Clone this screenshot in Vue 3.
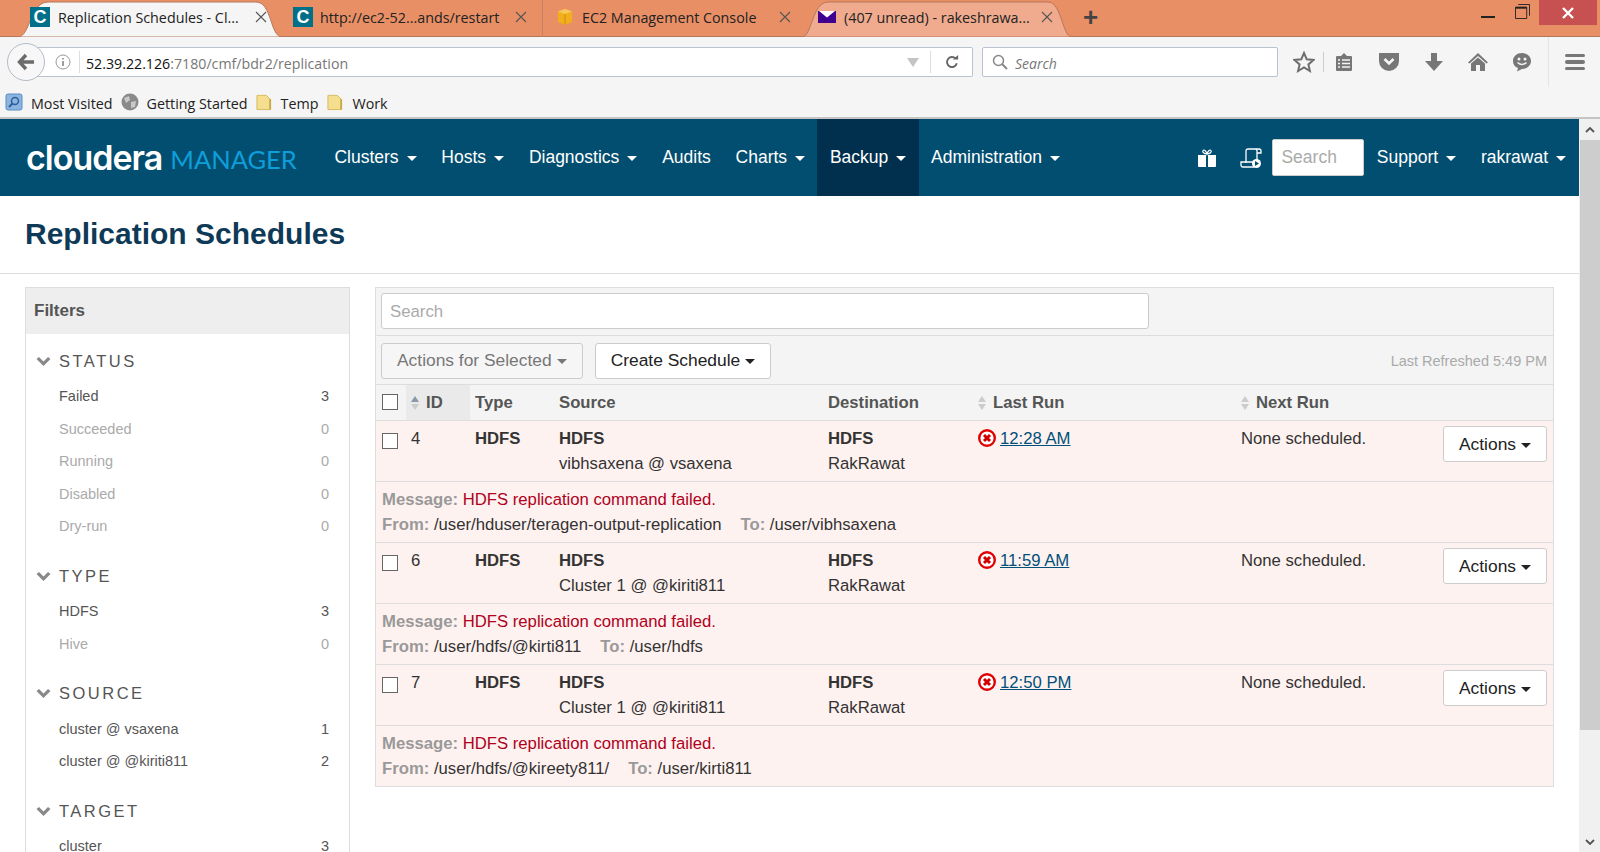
<template>
  <div class="browser">
    <!-- title bar and tabs -->
    <div class="tabstrip">
      <div v-for="t in tabs" :key="t.title" :class="['tab', t.cls]">
        <svg v-if="t.active || t.hover" class="tab-bg" :viewBox="t.active ? '0 0 264 37' : '0 0 270 37'" preserveAspectRatio="none">
          <path :d="t.active ? 'M0 37C12 37 12 2 30 2H238C254 2 252 37 264 37Z' : 'M0 37C10 37 10 2 26 2H246C260 2 260 37 270 37Z'" :fill="t.active ? '#f5f5f5' : '#f0ab8e'" stroke="#b5775a" />
        </svg>
        <span v-if="t.icon === 'c'" class="fav-c">C</span>
        <svg v-else-if="t.icon === 'aws'" class="fav" viewBox="0 0 18 18">
          <path d="M9 1 16 3.500V14L9 17 2 14V3.500Z" fill="#f2ae1c" />
          <path d="M9 6 16 3.500 9 1 2 3.500Z" fill="#f7c95c" />
          <path d="M9 6V17" stroke="#d18c0c" />
        </svg>
        <svg v-else class="fav" viewBox="0 0 18 18">
          <rect y="3" width="18" height="12" fill="#400090" />
          <path d="M1 3 9 9.500 17 3Z" fill="#fff" />
        </svg>
        <span class="tab-title">{{ t.title }}</span>
        <svg class="tab-x" viewBox="0 0 12 12"><path d="M1 1 11 11M11 1 1 11" stroke="#555" stroke-width="1.100" fill="none" /></svg>
      </div>
      <span class="tab-plus">+</span>
      <div class="win-btns">
        <span class="win-min"></span>
        <svg class="win-restore" viewBox="0 0 16 16"><path d="M3.500 .5H15.500V12.500M.5 3.500H12.500V15.500H.5Z" fill="none" stroke="#222" /><path d="M.5 4H12.500" stroke="#222" stroke-width="2" /></svg>
        <span class="win-close"><svg viewBox="0 0 12 12" width="12" height="12"><path d="M1 1 11 11M11 1 1 11" stroke="#fff" stroke-width="2.400" /></svg></span>
      </div>
    </div>

    <!-- url bar -->
    <div class="toolbar">
      <div class="back">
        <svg viewBox="0 0 20 20" width="20" height="20"><path d="M10 3 3.500 10 10 17M4 10H18" stroke="#6b6b6b" stroke-width="3.400" fill="none" /></svg>
      </div>
      <div class="urlbar">
        <svg class="info" viewBox="0 0 16 16" width="16" height="16"><circle cx="8" cy="8" r="7" fill="none" stroke="#999" /><path d="M8 7V12M8 4V5.500" stroke="#888" stroke-width="1.600" /></svg>
        <span class="url-div"></span>
        <span class="url"><b>52.39.22.126</b>:7180/cmf/bdr2/replication</span>
        <span class="url-arrow"></span>
        <span class="url-div2"></span>
        <svg class="reload" viewBox="0 0 16 16" width="14" height="14"><path d="M13.500 9.500A5.700 5.700 0 1 1 12 4" fill="none" stroke="#666" stroke-width="2.200" /><path d="M9 5H15V0Z" fill="#666" /></svg>
      </div>
      <div class="websearch">
        <svg viewBox="0 0 16 16" width="16" height="16"><circle cx="6.500" cy="6.500" r="5" fill="none" stroke="#888" stroke-width="1.500" /><path d="M10 10 15 15" stroke="#888" stroke-width="2" /></svg>
        <span>Search</span>
      </div>
      <div class="tool-icons">
        <svg class="ti-star" viewBox="0 0 22 22" width="22" height="22"><path d="M11 2 13.700 8.300 20.500 8.900 15.400 13.400 16.900 20 11 16.500 5.100 20 6.600 13.400 1.500 8.900 8.300 8.300Z" fill="none" stroke="#6e6e6e" stroke-width="2" /></svg>
        <span class="ti-div"></span>
        <svg class="ti-clip" viewBox="0 0 20 20" width="20" height="20"><path d="M2 5Q2 4 3 4H7L10 1 13 4H17Q18 4 18 5V18Q18 19 17 19H3Q2 19 2 18Z" fill="#777" /><path d="M4 8H6M8 8H16M4 11.500H6M8 11.500H16M4 15H6M8 15H16" stroke="#f5f5f5" stroke-width="1.500" /></svg>
        <svg class="ti-pocket" viewBox="0 0 22 20" width="22" height="20"><path d="M1 1H21V9A10 10 0 0 1 1 9Z" fill="#777" /><path d="M6.500 7 11 11.500 15.500 7" fill="none" stroke="#f5f5f5" stroke-width="2.600" /></svg>
        <svg class="ti-down" viewBox="0 0 20 20" width="20" height="20"><path d="M7 1H13V9H19L10 19 1 9H7Z" fill="#777" /></svg>
        <svg class="ti-home" viewBox="0 0 22 20" width="22" height="20"><path d="M11 1 21 10.500 19.500 11.500 11 4 2.500 11.500 1 10.500Z" fill="#777" /><path d="M4 11.500 11 5.500 18 11.500V19H13V13H9V19H4Z" fill="#777" /></svg>
        <svg class="ti-smile" viewBox="0 0 20 20" width="20" height="20"><path d="M10 1C15 1 19 4.500 19 9S15 17 10 17L5 19.500 6 16C3 15 1 12.500 1 9 1 4.500 5 1 10 1Z" fill="#777" /><circle cx="7" cy="7" r="1.500" fill="#f5f5f5" /><circle cx="13" cy="7" r="1.500" fill="#f5f5f5" /><path d="M5.500 10.500Q10 14.500 14.500 10.500" fill="none" stroke="#f5f5f5" stroke-width="1.500" /></svg>
        <span class="ti-div2"></span>
        <div class="burger"><i></i><i></i><i></i></div>
      </div>
    </div>

    <!-- bookmarks -->
    <div class="bookmarks">
      <span class="bm bm-most">
        <svg viewBox="0 0 18 18" width="18" height="18"><rect x="1" y="1" width="16" height="16" rx="2" fill="#8bb5e0" stroke="#5a8cc0" /><circle cx="10" cy="8" r="3.500" fill="none" stroke="#2f5f99" stroke-width="1.500" /><path d="M7.500 10.500 4 14" stroke="#2f5f99" stroke-width="2" /></svg>
        <span>Most Visited</span>
      </span>
      <span class="bm bm-start">
        <svg viewBox="0 0 18 18" width="18" height="18"><circle cx="9" cy="9" r="8.500" fill="#8a8a8a" /><path d="M3 5 8 3 9 7 5 10ZM10 9 15 8 14 14 10 15Z" fill="#c9c9c9" /></svg>
        <span>Getting Started</span>
      </span>
      <span class="bm bm-temp">
        <svg viewBox="0 0 18 18" width="17" height="18"><path d="M1 2H11L15 6V17H1Z" fill="#f5df8f" stroke="#d6b95c" /><path d="M15 6V17" stroke="#c9a94a" stroke-width="2" /></svg>
        <span>Temp</span>
      </span>
      <span class="bm bm-work">
        <svg viewBox="0 0 18 18" width="17" height="18"><path d="M1 2H11L15 6V17H1Z" fill="#f5df8f" stroke="#d6b95c" /><path d="M15 6V17" stroke="#c9a94a" stroke-width="2" /></svg>
        <span>Work</span>
      </span>
    </div>

    <div class="viewport">
      <div class="page">
        <!-- app nav -->
        <nav class="nav">
          <div class="logo"><span class="logo-a">cloudera</span><span class="logo-b">MANAGER</span></div>
          <a v-for="n in navItems" :key="n.label" :class="['nav-item', { active: n.active }]">
            {{ n.label }}<i v-if="n.caret" class="caret"></i>
          </a>
          <div class="nav-right">
            <svg class="gift" viewBox="0 0 20 18" width="20" height="18"><path d="M1 6H9V18H2Q1 18 1 17ZM11 6H19V17Q19 18 18 18H11Z" fill="#fff" /><path d="M10 5C7 5 5 3 6 1.500S9 2 10 5C11 2 13 0 14 1.500S13 5 10 5Z" fill="none" stroke="#fff" stroke-width="1.200" /></svg>
            <svg class="scroll" viewBox="0 0 22 20" width="22" height="20"><path d="M6 15V3Q6 1 8 1H19Q21 1 21 3V5H17M17 5V3Q17 1 15 1M17 5V12" fill="none" stroke="#fff" stroke-width="1.300" /><path d="M1 14H14V19H3Q1 19 1 17Z" fill="none" stroke="#fff" stroke-width="1.300" /><circle cx="16.500" cy="15.500" r="4.500" fill="#fff" /><path d="M15 13V18L19 15.500Z" fill="#004d70" /></svg>
            <div class="nav-search">Search</div>
            <a class="nav-item nav-support">Support<i class="caret"></i></a>
            <a class="nav-item nav-user">rakrawat<i class="caret"></i></a>
          </div>
        </nav>

        <h1 class="page-title">Replication Schedules</h1>

        <div class="main">
          <aside class="filters">
            <div class="filters-head">Filters</div>
            <section v-for="g in filterGroups" :key="g.name" class="fgroup">
              <div class="fgroup-name">
                <svg viewBox="0 0 14 9" width="15" height="9"><path d="M0 2 2.500 0 7 4.500 11.500 0 14 2 7 9Z" fill="#888" /></svg>
                {{ g.name }}
              </div>
              <div v-for="o in g.options" :key="o.label" :class="['fopt', { muted: o.count === 0 }]">
                <span>{{ o.label }}</span><span>{{ o.count }}</span>
              </div>
            </section>
          </aside>

          <div class="panel">
            <div class="panel-search">
              <div class="search-input">Search</div>
            </div>
            <div class="panel-actions">
              <button class="btn btn-disabled">Actions for Selected<i class="caret-sm"></i></button>
              <button class="btn btn-create">Create Schedule<i class="caret-sm"></i></button>
              <span class="refreshed">Last Refreshed 5:49 PM</span>
            </div>

            <div class="row thead">
              <div class="c-check"><span class="check"></span></div>
              <div class="c-id sorted"><span class="sort sort-up"></span>ID</div>
              <div class="c-type">Type</div>
              <div class="c-src">Source</div>
              <div class="c-dest">Destination</div>
              <div class="c-last"><span class="sort"></span>Last Run</div>
              <div class="c-next"><span class="sort"></span>Next Run</div>
            </div>

            <template v-for="s in schedules" :key="s.id">
              <div class="row tbody">
                <div class="c-check"><span class="check"></span></div>
                <div class="c-id">{{ s.id }}</div>
                <div class="c-type"><b>HDFS</b></div>
                <div class="c-src"><b>HDFS</b><br />{{ s.source }}</div>
                <div class="c-dest"><b>HDFS</b><br />RakRawat</div>
                <div class="c-last">
                  <svg class="err" viewBox="0 0 18 18" width="18" height="18"><circle cx="9" cy="9" r="7.800" fill="#fff" stroke="#e00000" stroke-width="2.400" /><path d="M6 6 12 12M12 6 6 12" stroke="#d00000" stroke-width="3" /></svg>
                  <a class="time">{{ s.time }}</a>
                </div>
                <div class="c-next">None scheduled.</div>
                <div class="c-act"><button class="btn btn-act">Actions<i class="caret-sm"></i></button></div>
              </div>
              <div class="msg">
                <div><b>Message:</b> <span class="msg-red">HDFS replication command failed.</span></div>
                <div><b>From:</b> {{ s.from }}<b class="to">To:</b> {{ s.to }}</div>
              </div>
            </template>
          </div>
        </div>
      </div>

      <div class="scrollbar">
        <div class="sb-btn"><svg viewBox="0 0 10 6" width="10" height="6"><path d="M1 5 5 1 9 5" fill="none" stroke="#555" stroke-width="1.800" /></svg></div>
        <div class="sb-thumb"></div>
        <div class="sb-track"></div>
        <div class="sb-btn"><svg viewBox="0 0 10 6" width="10" height="6"><path d="M1 1 5 5 9 1" fill="none" stroke="#555" stroke-width="1.800" /></svg></div>
      </div>
    </div>
  </div>
</template>

<script setup>
const tabs = [
  { title: 'Replication Schedules - Cl...', icon: 'c', cls: 'tab-1', active: true },
  { title: 'http://ec2-52...ands/restart', icon: 'c', cls: 'tab-2' },
  { title: 'EC2 Management Console', icon: 'aws', cls: 'tab-3' },
  { title: '(407 unread) - rakeshrawa...', icon: 'mail', cls: 'tab-4', hover: true },
]

const navItems = [
  { label: 'Clusters', caret: true },
  { label: 'Hosts', caret: true },
  { label: 'Diagnostics', caret: true },
  { label: 'Audits' },
  { label: 'Charts', caret: true },
  { label: 'Backup', caret: true, active: true },
  { label: 'Administration', caret: true },
]

const filterGroups = [
  {
    name: 'STATUS',
    options: [
      { label: 'Failed', count: 3 },
      { label: 'Succeeded', count: 0 },
      { label: 'Running', count: 0 },
      { label: 'Disabled', count: 0 },
      { label: 'Dry-run', count: 0 },
    ],
  },
  {
    name: 'TYPE',
    options: [
      { label: 'HDFS', count: 3 },
      { label: 'Hive', count: 0 },
    ],
  },
  {
    name: 'SOURCE',
    options: [
      { label: 'cluster @ vsaxena', count: 1 },
      { label: 'cluster @ @kiriti811', count: 2 },
    ],
  },
  {
    name: 'TARGET',
    options: [{ label: 'cluster', count: 3 }],
  },
]

const schedules = [
  { id: 4, source: 'vibhsaxena @ vsaxena', time: '12:28 AM', from: '/user/hduser/teragen-output-replication', to: '/user/vibhsaxena' },
  { id: 6, source: 'Cluster 1 @ @kiriti811', time: '11:59 AM', from: '/user/hdfs/@kirti811', to: '/user/hdfs' },
  { id: 7, source: 'Cluster 1 @ @kiriti811', time: '12:50 PM', from: '/user/hdfs/@kireety811/', to: '/user/kirti811' },
]
</script>

<style>
html, body { margin: 0; overflow: hidden; }
</style>

<style scoped>
.browser {
  width: 1600px;
  height: 852px;
  overflow: hidden;
  display: flex;
  flex-direction: column;
  font-family: "Liberation Sans", Arial, sans-serif;
  background: #fff;
}

/* tabs */
.tabstrip {
  height: 37px;
  flex: none;
  background: #e98f66;
  border-bottom: 1px solid #b5775a;
  box-sizing: border-box;
  display: flex;
  padding-left: 18px;
  position: relative;
}
.tab {
  position: relative;
  height: 37px;
  display: flex;
  align-items: center;
  box-sizing: border-box;
  padding-bottom: 3px;
  font-family: "Open Sans", sans-serif;
  font-size: 14.300px;
  color: #222;
}
.tab-1 { width: 264px; padding-left: 12px; }
.tab-2 { width: 261px; padding-left: 11px; border-right: 1px solid #c98261; background-clip: padding-box; }
.tab-3 { width: 259px; padding-left: 13px; }
.tab-4 { width: 270px; padding-left: 16px; }
.tab-bg {
  position: absolute;
  left: 0;
  top: 0;
  width: 100%;
  height: 37px;
}
.fav-c {
  position: relative;
  width: 20px;
  height: 20px;
  background: #00708a;
  color: #fff;
  font: bold 18px/20px "Liberation Sans", sans-serif;
  text-align: center;
  flex: none;
}
.fav { position: relative; width: 18px; height: 18px; flex: none; }
.tab-title { position: relative; margin-left: 8px; white-space: nowrap; flex: 1; }
.tab-2 .tab-title { margin-left: 7px; }
.tab-x { position: relative; width: 12px; height: 12px; flex: none; }
.tab-1 .tab-x, .tab-2 .tab-x { margin-right: 15px; }
.tab-3 .tab-x { margin-right: 11px; }
.tab-4 .tab-x { margin-right: 19px; }
.tab-plus {
  margin-left: 11px;
  font: bold 26px/34px "Liberation Sans", sans-serif;
  color: #444;
}
.win-btns {
  position: absolute;
  right: 3px;
  top: 0;
  display: flex;
  align-items: flex-start;
}
.win-min { width: 14px; height: 2px; background: #222; margin-top: 16px; margin-right: 20px; }
.win-restore { width: 15px; height: 15px; margin-top: 4px; margin-right: 9px; }
.win-close {
  width: 58px;
  height: 25px;
  background: #c75050;
  display: flex;
  align-items: center;
  justify-content: center;
}

/* toolbar */
.toolbar {
  height: 50px;
  flex: none;
  background: #f5f5f5;
  display: flex;
  align-items: center;
  position: relative;
  padding: 0 0 0 7px;
  box-sizing: border-box;
}
.back {
  width: 38px;
  height: 38px;
  box-sizing: border-box;
  border: 1px solid #b4bcc8;
  border-radius: 50%;
  background: #f7f7f7;
  display: flex;
  align-items: center;
  justify-content: center;
  position: relative;
  z-index: 1;
  flex: none;
}
.urlbar {
  margin-left: -10px;
  width: 938px;
  height: 30px;
  box-sizing: border-box;
  background: #fff;
  border: 1px solid #b9c2cf;
  border-left: none;
  border-radius: 0 2px 2px 0;
  display: flex;
  align-items: center;
  padding-left: 20px;
  flex: none;
}
.url-div { width: 1px; height: 22px; background: #ddd; margin-left: 8px; }
.url {
  margin-left: 6px;
  padding-top: 2px;
  font-family: "Open Sans", sans-serif;
  font-size: 14.200px;
  color: #777;
  flex: 1;
}
.url b { font-weight: 400; color: #111; }
.url-arrow {
  width: 0;
  height: 0;
  border-left: 6px solid transparent;
  border-right: 6px solid transparent;
  border-top: 9px solid #c4c4c4;
}
.url-div2 { width: 1px; height: 22px; background: #ddd; margin-left: 11px; }
.reload { margin: 0 13px 0 14px; }
.websearch {
  margin-left: 9px;
  width: 296px;
  height: 30px;
  box-sizing: border-box;
  background: #fff;
  border: 1px solid #b9c2cf;
  border-radius: 2px;
  display: flex;
  align-items: center;
  gap: 7px;
  padding-left: 9px;
  font-family: "Open Sans", sans-serif;
  font-style: italic;
  font-size: 14px;
  color: #777;
  flex: none;
}
.websearch span { padding-top: 2px; }
.tool-icons { display: flex; align-items: center; margin-left: 15px; flex: 1; height: 50px; }
.ti-div { width: 1px; height: 20px; background: #ccc; margin-left: 8px; }
.ti-clip { margin-left: 10px; }
.ti-pocket { margin-left: 24px; }
.ti-down { margin-left: 24px; }
.ti-home { margin-left: 23px; }
.ti-smile { margin-left: 23px; }
.ti-div2 { width: 1px; height: 50px; background: #e4e4e4; margin-left: 16px; }
.burger { margin-left: 16px; display: flex; flex-direction: column; gap: 3px; }
.burger i { display: block; width: 20px; height: 3.500px; background: #777; border-radius: 2px; }

/* bookmarks */
.bookmarks {
  height: 30px;
  flex: none;
  background: #f5f5f5;
  border-bottom: 2px solid #c4c4c4;
  display: flex;
  align-items: center;
  font-family: "Open Sans", sans-serif;
  font-size: 14.300px;
  color: #222;
  padding-left: 5px;
}
.bm { display: flex; align-items: center; gap: 8px; }
.bm > span { padding-top: 2px; }
.bm-start { margin-left: 8px; }
.bm-temp { margin-left: 8px; }
.bm-work { margin-left: 9px; }

/* page */
.viewport { flex: 1; display: flex; min-height: 0; }
.page { flex: 1; min-width: 0; overflow: hidden; }
.nav {
  height: 77px;
  background: #024e70;
  display: flex;
  align-items: stretch;
  color: #fff;
  font-size: 17.500px;
}
.logo { width: 322px; padding-left: 26px; box-sizing: border-box; display: flex; align-items: center; flex: none; gap: 8px; }
.logo-a { font-family: Inter, sans-serif; font-weight: 600; font-size: 34px; letter-spacing: -1px; color: #fff; }
.logo-b { font-family: Lato, sans-serif; font-size: 25.500px; color: #0e9fdb; margin-top: 2px; }
.nav-item {
  display: flex;
  align-items: center;
  padding: 0 12.400px;
  white-space: nowrap;
}
.nav-item.active { background: #00304d; }
.caret {
  display: inline-block;
  margin-left: 8px;
  margin-top: 2px;
  border-left: 5px solid transparent;
  border-right: 5px solid transparent;
  border-top: 5px solid #fff;
}
.nav-right { margin-left: auto; display: flex; align-items: center; }
.gift { margin-right: 23px; }
.scroll { margin-right: 10px; }
.nav-search {
  width: 92px;
  height: 37px;
  box-sizing: border-box;
  background: #fff;
  border: 1px solid #ccc;
  border-radius: 2px;
  color: #aaa;
  line-height: 35px;
  padding-left: 8px;
}
.nav-item.nav-user { padding-right: 13px; }

.page-title {
  margin: 0;
  height: 78px;
  box-sizing: border-box;
  padding-left: 25px;
  border-bottom: 1px solid #ddd;
  font-size: 30px;
  line-height: 76px;
  font-weight: 700;
  color: #0f3a57;
}
.main {
  display: flex;
  align-items: flex-start;
  gap: 25px;
  padding: 13px 25px 0;
}

/* filters */
.filters {
  width: 325px;
  height: 600px;
  flex: none;
  box-sizing: border-box;
  border: 1px solid #ddd;
  border-bottom: none;
  color: #555;
  font-size: 14.500px;
}
.filters-head {
  height: 46px;
  background: #eee;
  font-size: 17px;
  font-weight: 700;
  line-height: 46px;
  padding-left: 8px;
}
.fgroup { padding-left: 10px; padding-right: 20px; margin-bottom: 17.500px; }
.fgroup-name {
  height: 32px;
  display: flex;
  align-items: center;
  gap: 8px;
  font-size: 16.500px;
  letter-spacing: 2.500px;
  margin-bottom: 3px;
}
.filters-head + .fgroup { margin-top: 11px; }
.fopt {
  height: 32.500px;
  line-height: 32.500px;
  display: flex;
  justify-content: space-between;
  padding-left: 23px;
}
.fopt.muted { color: #aaa; }

/* table panel */
.panel {
  flex: 1;
  min-width: 0;
  box-sizing: border-box;
  border: 1px solid #ddd;
  font-size: 16.700px;
  color: #333;
}
.panel-search {
  height: 48px;
  background: #f4f4f4;
  padding: 5px 0 0 5px;
  box-sizing: border-box;
  border-bottom: 1px solid #ddd;
}
.search-input {
  width: 768px;
  height: 36px;
  box-sizing: border-box;
  background: #fff;
  border: 1px solid #ccc;
  border-radius: 3px;
  color: #aaa;
  font-size: 16.800px;
  line-height: 36px;
  padding-left: 8px;
}
.panel-actions {
  height: 49px;
  box-sizing: border-box;
  background: #f4f4f4;
  border-bottom: 1px solid #ddd;
  display: flex;
  align-items: center;
  padding: 1px 6px 0 5px;
}
.btn {
  height: 36px;
  box-sizing: border-box;
  border: 1px solid #ccc;
  border-radius: 3px;
  background: #fff;
  font: inherit;
  font-size: 17.400px;
  color: #222;
  padding: 0 15px;
  white-space: nowrap;
}
.btn-disabled { background: #f6f6f6; color: #777; }
.btn-create { margin-left: 12px; }
.caret-sm {
  display: inline-block;
  margin-left: 5px;
  vertical-align: 2px;
  border-left: 5px solid transparent;
  border-right: 5px solid transparent;
  border-top: 5px solid currentColor;
}
.refreshed { margin-left: auto; font-size: 14.500px; color: #aaa; }

.row { display: flex; }
.thead {
  height: 35px;
  background: #f4f4f4;
  border-bottom: 1px solid #ddd;
  font-weight: 700;
  color: #555;
  align-items: stretch;
  line-height: 35px;
}
.tbody {
  height: 60px;
  background: #fef2f0;
  border-bottom: 1px solid #ddd;
  line-height: 25px;
}
.row > div { box-sizing: border-box; flex: none; }
.row > .c-check { width: 30px; padding-left: 6px; }
.row > .c-id { width: 64px; padding-left: 5px; }
.row > .c-type { width: 89px; padding-left: 5px; }
.row > .c-src { width: 269px; }
.row > .c-dest { width: 150px; }
.row > .c-last { width: 263px; }
.row > .c-next { width: 200px; }
.row > .c-act { flex: 1; display: flex; justify-content: flex-end; padding: 5px 6px 0 0; }
.tbody > div:not(.c-act) { padding-top: 5px; }
.tbody > .c-check { padding-top: 6px; }
.thead .sorted { background: #eaeaea; }
.check {
  display: inline-block;
  width: 16px;
  height: 16px;
  box-sizing: border-box;
  border: 1px solid #666;
  background: #fff;
  vertical-align: -2px;
}
.tbody .check { vertical-align: -5px; }
.sort {
  display: inline-block;
  position: relative;
  width: 8px;
  height: 14px;
  margin-right: 7px;
  vertical-align: -2px;
}
.sort::before, .sort::after {
  content: "";
  position: absolute;
  left: 0;
  border-left: 4px solid transparent;
  border-right: 4px solid transparent;
}
.sort::before { top: 0; border-bottom: 6px solid #ccc; }
.sort::after { bottom: 0; border-top: 6px solid #ccc; }
.sort-up::before { border-bottom-color: #8a98a8; }
.err { vertical-align: -3px; margin-right: 4px; }
.time { color: #00507a; text-decoration: underline; }
.msg {
  height: 61px;
  box-sizing: border-box;
  background: #fef2f0;
  border-bottom: 1px solid #ddd;
  padding-left: 6px;
  line-height: 25px;
}
.msg:last-child { height: 60px; border-bottom: none; }
.msg > div:first-child { padding-top: 5px; }
.msg b { color: #999; }
.msg-red { color: #b00020; }
.msg .to { margin-left: 19px; }

/* scrollbar */
.scrollbar {
  width: 21px;
  flex: none;
  background: #f0f0f0;
  display: flex;
  flex-direction: column;
  align-items: stretch;
}
.sb-btn { height: 21px; display: flex; align-items: center; justify-content: center; flex: none; }
.sb-thumb { height: 590px; background: #cdcdcd; margin-left: 1px; flex: none; }
.sb-track { flex: 1; }
</style>
